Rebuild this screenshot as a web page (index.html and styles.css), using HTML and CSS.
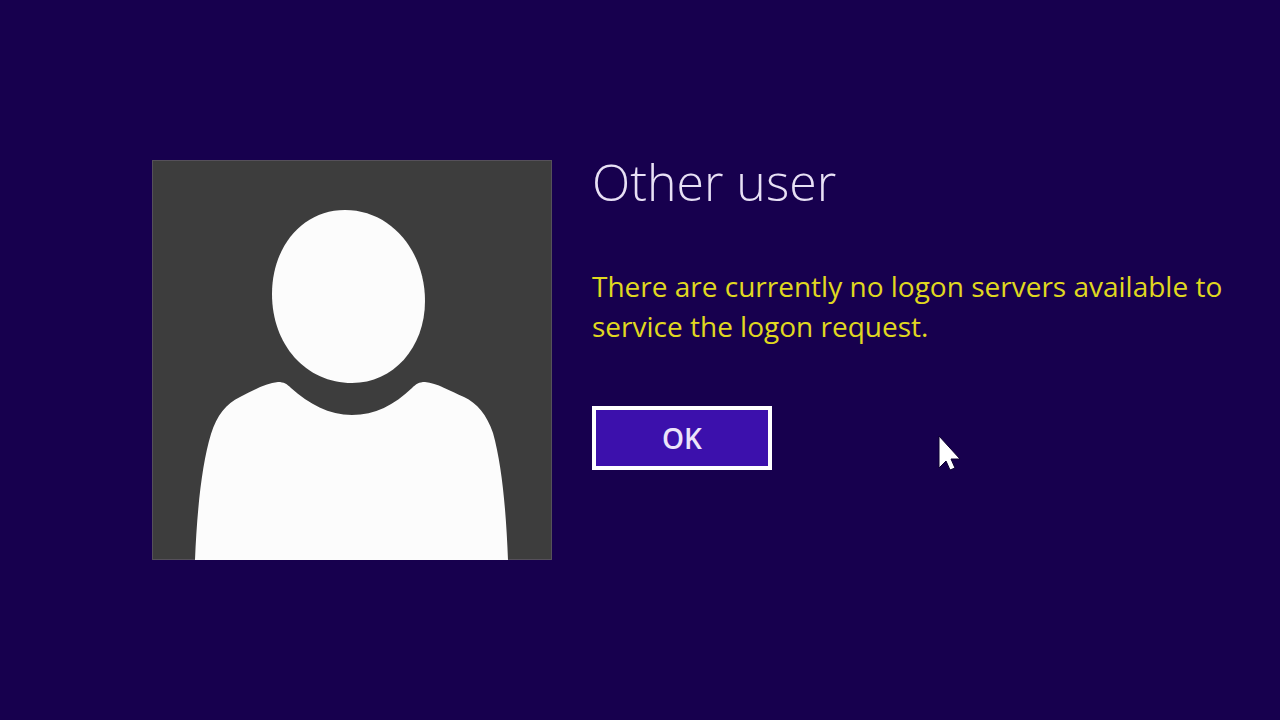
FILE: index.html
```html
<!DOCTYPE html>
<html lang="en">
<head>
    <meta charset="UTF-8">
    <meta name="viewport" content="width=device-width, initial-scale=1">
    <title>Other user</title>
    <link rel="stylesheet" href="styles.css">
</head>
<body>
    <main class="logon">
        <svg class="avatar" viewBox="0 0 400 400" aria-hidden="true">
            <rect class="avatar-bg" x="0.5" y="0.5" width="399" height="399"/>
            <path class="avatar-person" d="M193 50C239 50 273 91 273 141C273 188 241 223 200 223C154 223 120 185 120 134C120 86 151 50 193 50Z"/>
            <path class="avatar-person" d="M43 400C45 350 50 303 59 274C65 255 74 244 88 237C102 230 114 223 126 222C132 222 135 224 139 228C157 244 177 255 200 255C223 255 242 245 260 228C264 224 267 222 273 222C285 223 298 231 312 237C325 243 335 255 341 273C350 305 354 350 356 400Z"/>
        </svg>

        <div class="details">
            <h1 class="user-name">Other user</h1>
            <p class="message" role="alert">There are currently no logon servers available to service the logon request.</p>
            <button class="ok-button" type="button">OK</button>
        </div>
    </main>

    <svg class="cursor" viewBox="0 0 26 40" aria-hidden="true">
        <path d="M2 2V34L9 27L13 36L18 34L14 25H23Z"/>
    </svg>
</body>
</html>
```
FILE: styles.css
```css
* {
    box-sizing: border-box;
}

body {
    margin: 0;
    min-height: 100vh;
    display: flex;
    align-items: center;
    background: #17004e;
    font-family: "Open Sans", "Noto Sans", sans-serif;
    position: relative;
}

.logon {
    display: flex;
    gap: 40px;
    width: 100%;
    padding: 0 40px 0 152px;
}

.avatar {
    flex: none;
    width: 400px;
    height: 400px;
}

.avatar-bg {
    fill: #3d3d3d;
    stroke: #55505a;
}

.avatar-person {
    fill: #fcfcfc;
}

.details {
    flex: 1;
}

.user-name {
    margin: 0 0 62px;
    font-size: 50px;
    font-weight: 300;
    line-height: 44px;
    color: #e8e0f5;
}

.message {
    margin: 0 0 60px;
    font-size: 28px;
    line-height: 40px;
    color: #e0d820;
}

.ok-button {
    display: block;
    width: 180px;
    height: 64px;
    padding: 0;
    border: 4px solid #fff;
    background: #3c10ac;
    color: #ece4fa;
    font-family: inherit;
    font-size: 28px;
    font-weight: 600;
}

/* mouse pointer floating over the screen */
.cursor {
    position: absolute;
    left: 937px;
    top: 434px;
    width: 26px;
    height: 40px;
    fill: #fff;
    stroke: #0c0030;
}
```
